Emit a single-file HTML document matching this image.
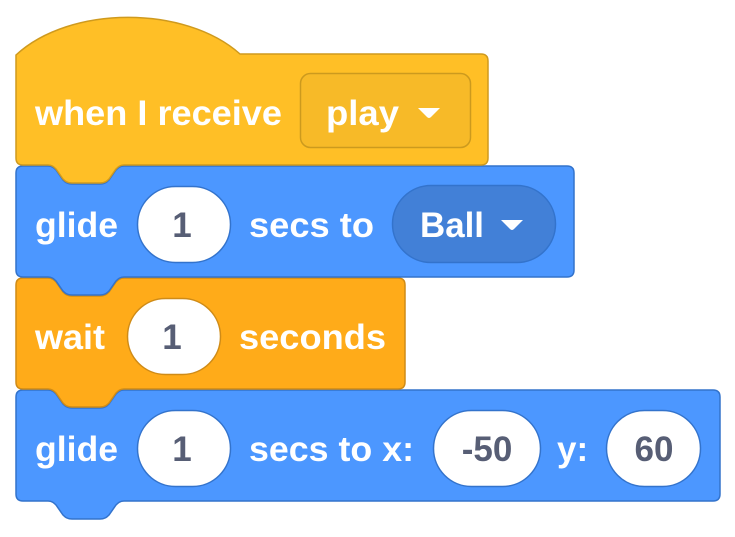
<!DOCTYPE html>
<html><head><meta charset="utf-8"><style>
html,body{margin:0;padding:0;background:#fff;width:735px;height:537px;overflow:hidden}
svg{display:block}
text{font-family:"Liberation Sans",Arial,sans-serif;font-weight:bold;font-size:35px}
.w{fill:#fff}
.n{fill:#575E75;text-anchor:middle}
</style></head><body>
<svg width="735" height="537" viewBox="0 0 735 537" xmlns="http://www.w3.org/2000/svg">
<path d="M16,397 Q16,390 23,390 H48 C52,390 54,392 56,394 L63,404 C65,406 67,408 72,408 H100 C105,408 107,406 109,404 L116,394 C118,392 120,390 124,390 H713 Q720,390 720,397 V494 Q720,501 713,501 H124 C120,501 118,503 116,505 L109,515 C107,517 105,519 100,519 H72 C67,519 65,517 63,515 L56,505 C54,503 52,501 48,501 H23 Q16,501 16,494 Z" fill="#4C97FF" stroke="#3373CC" stroke-width="1.5"/>
<path d="M16,285 Q16,278 23,278 H48 C52,278 54,280 56,282 L63,292 C65,294 67,296 72,296 H100 C105,296 107,294 109,292 L116,282 C118,280 120,278 124,278 H398 Q405,278 405,285 V382 Q405,389 398,389 H124 C120,389 118,391 116,393 L109,403 C107,405 105,407 100,407 H72 C67,407 65,405 63,403 L56,393 C54,391 52,389 48,389 H23 Q16,389 16,382 Z" fill="#FFAB19" stroke="#CF8B17" stroke-width="1.5"/>
<path d="M16,173 Q16,166 23,166 H48 C52,166 54,168 56,170 L63,180 C65,182 67,184 72,184 H100 C105,184 107,182 109,180 L116,170 C118,168 120,166 124,166 H567 Q574,166 574,173 V270 Q574,277 567,277 H124 C120,277 118,279 116,281 L109,291 C107,293 105,295 100,295 H72 C67,295 65,293 63,291 L56,281 C54,279 52,277 48,277 H23 Q16,277 16,270 Z" fill="#4C97FF" stroke="#3373CC" stroke-width="1.5"/>
<path d="M16,55 C70,5 185,5 240,54 H481 Q488,54 488,61 V158 Q488,165 481,165 H124 C120,165 118,167 116,169 L109,179 C107,181 105,183 100,183 H72 C67,183 65,181 63,179 L56,169 C54,167 52,165 48,165 H23 Q16,165 16,158 Z" fill="#FFBF26" stroke="#CF9A1E" stroke-width="1.5"/>

<text class="w" x="35" y="125" textLength="247" lengthAdjust="spacingAndGlyphs">when I receive</text>
<rect x="300.5" y="73.5" width="170" height="74" rx="10" fill="#F7BA28" stroke="#CC9A1E" stroke-width="1.5"/>
<text class="w" x="326" y="125" textLength="73" lengthAdjust="spacingAndGlyphs">play</text>
<path d="M418,108 H440 L431,117 Q429,119 427,117 Z" fill="#fff"/>

<text class="w" x="35" y="237" textLength="83" lengthAdjust="spacingAndGlyphs">glide</text>
<rect x="137.5" y="186.5" width="93" height="76" rx="38" fill="#fff" stroke="#3373CC" stroke-width="1.5"/>
<text class="n" x="182" y="237">1</text>
<text class="w" x="249" y="237" textLength="125" lengthAdjust="spacingAndGlyphs">secs to</text>
<rect x="392.5" y="185.5" width="163" height="77" rx="38.5" fill="#4280D7" stroke="#3373CC" stroke-width="1.5"/>
<text class="w" x="420" y="237" textLength="64" lengthAdjust="spacingAndGlyphs">Ball</text>
<path d="M501,220 H523 L514,229 Q512,231 510,229 Z" fill="#fff"/>

<text class="w" x="35" y="349" textLength="70" lengthAdjust="spacingAndGlyphs">wait</text>
<rect x="127.5" y="298.5" width="93" height="76" rx="38" fill="#fff" stroke="#CF8B17" stroke-width="1.5"/>
<text class="n" x="172" y="349">1</text>
<text class="w" x="239" y="349" textLength="147" lengthAdjust="spacingAndGlyphs">seconds</text>

<text class="w" x="35" y="461" textLength="83" lengthAdjust="spacingAndGlyphs">glide</text>
<rect x="137.5" y="410.5" width="93" height="76" rx="38" fill="#fff" stroke="#3373CC" stroke-width="1.5"/>
<text class="n" x="182" y="461">1</text>
<text class="w" x="249" y="461" textLength="165" lengthAdjust="spacingAndGlyphs">secs to x:</text>
<rect x="433.5" y="410.5" width="107" height="76" rx="38" fill="#fff" stroke="#3373CC" stroke-width="1.5"/>
<text class="n" x="487" y="461">-50</text>
<text class="w" x="557" y="461">y:</text>
<rect x="606.5" y="410.5" width="94" height="76" rx="38" fill="#fff" stroke="#3373CC" stroke-width="1.5"/>
<text class="n" x="654" y="461">60</text>
</svg>
</body></html>
